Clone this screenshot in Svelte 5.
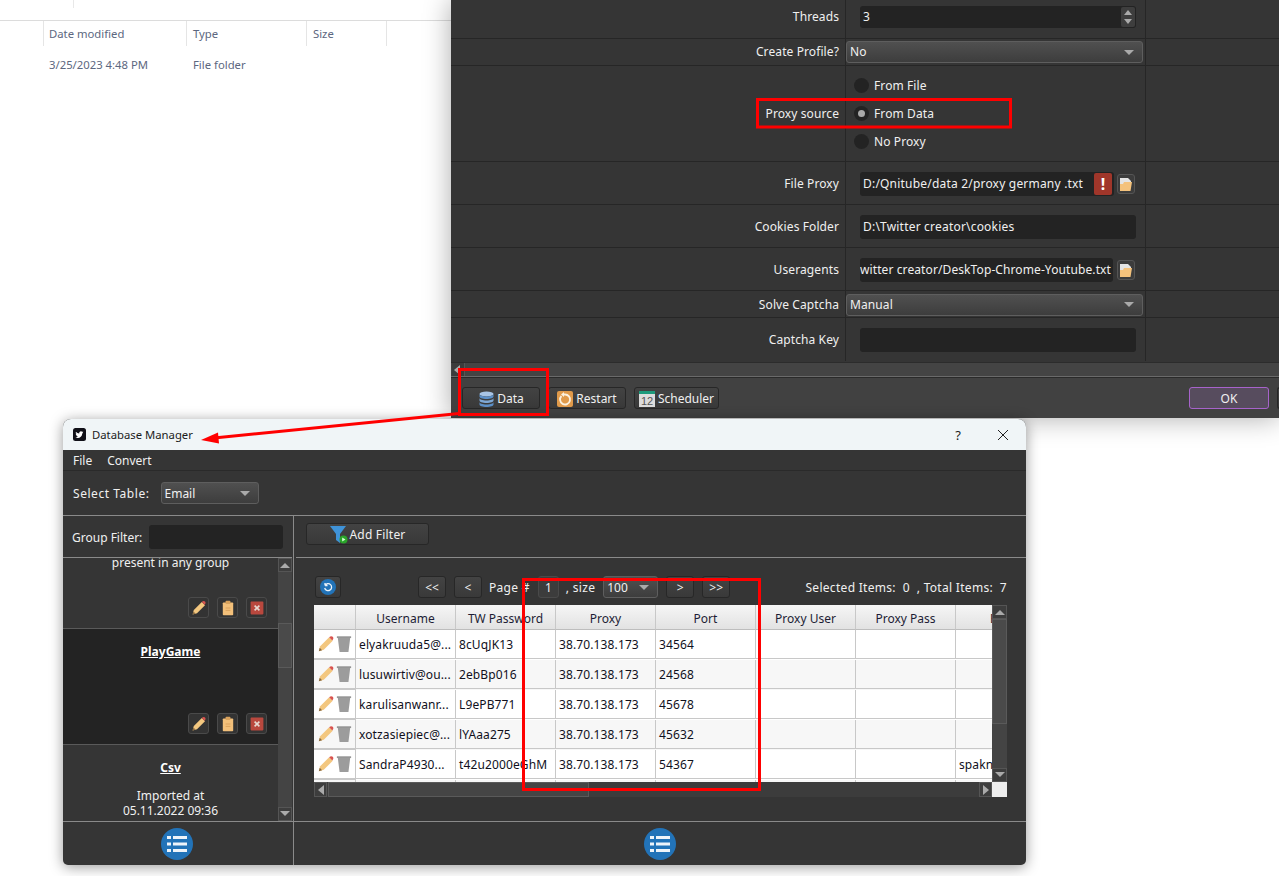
<script>
  const rows = [
    ['elyakruuda5@...', '8cUqJK13', '38.70.138.173', '34564', '', '', ''],
    ['lusuwirtiv@ou...', '2ebBp016', '38.70.138.173', '24568', '', '', ''],
    ['karulisanwanr...', 'L9ePB771', '38.70.138.173', '45678', '', '', ''],
    ['xotzasiepiec@...', 'lYAaa275', '38.70.138.173', '45632', '', '', ''],
    ['SandraP4930...', 't42u2000eGhM', '38.70.138.173', '54367', '', '', 'spaknmrz'],
    ['', '', '', '', '', '', '']
  ];
  const heads = ['', 'Username', 'TW Password', 'Proxy', 'Port', 'Proxy User', 'Proxy Pass', 'Email'];
</script>

<svg class="defs" aria-hidden="true">
  <symbol id="pencil" viewBox="0 0 20 20">
    <path d="M2 18l1.5-5.5L13.5 2.5l4 4L7.500 16.500z" fill="#f3c77f"/>
    <path d="M13.500 2.500c1.500-1.500 3-1.500 4-.5s1 2.500-.5 4z" fill="#d9534f"/>
    <path d="M2 18l1-3.700 2.700 2.700z" fill="#8a6a40"/>
  </symbol>
  <symbol id="clip" viewBox="0 0 20 20">
    <rect x="3.500" y="3" width="13" height="16" rx="1" fill="#f3c07a"/>
    <rect x="7" y="1" width="6" height="4" rx="1" fill="#d9a25c"/>
    <path d="M7 10h6M7 13h6" stroke="#d49a55" stroke-width="1"/>
  </symbol>
  <symbol id="xbox" viewBox="0 0 20 20">
    <rect x="2" y="2" width="16" height="16" rx="1" fill="#b9483e"/>
    <path d="M7 7l6 6M13 7l-6 6" stroke="#e8d8d0" stroke-width="2"/>
  </symbol>
  <symbol id="trash" viewBox="0 0 18 20">
    <path d="M1 1.500h16v1.500H1z" fill="#777"/>
    <path d="M2 3h14l-2 16H4z" fill="#9c9c9c"/>
  </symbol>
  <symbol id="folder" viewBox="0 0 14 16">
    <path d="M1 2h8l3 3v3H1z" fill="#e4e4e4"/>
    <path d="M1 8h3l1-2h8l-1.500 9H1z" fill="#f4c27c"/>
  </symbol>
  <symbol id="listc" viewBox="0 0 32 32">
    <circle cx="16" cy="16" r="16" fill="#2273b8"/>
    <path d="M6 8h4v3H6zM12 8h14v3H12zM6 14.500h4v3H6zM12 14.500h14v3H12zM6 21h4v3H6zM12 21h14v3H12z" fill="#eef4fa"/>
  </symbol>
</svg>

<div class="desk">
  <section class="explorer">
    <div class="tick"></div>
    <div class="ex-head">
      <span class="c1">Date modified</span><span class="c2">Type</span><span class="c3">Size</span>
    </div>
    <div class="ex-row">
      <span class="c1">3/25/2023 4:48 PM</span><span class="c2">File folder</span>
    </div>
  </section>

  <section class="settings">
    <div class="form">
      <div class="row h38">
        <label for="t">Threads</label>
        <div class="fld">
          <div class="input spin" id="t"><span>3</span>
            <div class="arrows"><svg width="12" height="18" viewBox="0 0 12 18"><path d="M2 7l4-5 4 5z" fill="#aaa"/><path d="M2 11l4 5 4-5z" fill="#aaa"/></svg></div>
          </div>
        </div>
        <div></div>
      </div>
      <div class="row h27">
        <span class="lab">Create Profile?</span>
        <div class="fld"><div class="combo wide"><span>No</span><i class="tri"></i></div></div>
        <div></div>
      </div>
      <div class="row h96">
        <span class="lab">Proxy source</span>
        <div class="radios">
          <div class="radio"><i></i>From File</div>
          <div class="radio on"><i></i>From Data</div>
          <div class="radio"><i></i>No Proxy</div>
        </div>
        <div></div>
      </div>
      <div class="row h43 nudge">
        <span class="lab">File Proxy</span>
        <div class="fld line">
          <div class="input grow"><span>D:/Qnitube/data 2/proxy germany .txt</span></div>
          <div class="warn">!</div>
          <div class="tool"><svg width="14" height="16"><use href="#folder"/></svg></div>
        </div>
        <div></div>
      </div>
      <div class="row h43 nudge">
        <span class="lab">Cookies Folder</span>
        <div class="fld"><div class="input"><span>D:\Twitter creator\cookies</span></div></div>
        <div></div>
      </div>
      <div class="row h43 nudge">
        <span class="lab">Useragents</span>
        <div class="fld line">
          <div class="input grow ua"><span>witter creator/DeskTop-Chrome-Youtube.txt</span></div>
          <div class="tool"><svg width="14" height="16"><use href="#folder"/></svg></div>
        </div>
        <div></div>
      </div>
      <div class="row h27 nudge">
        <span class="lab">Solve Captcha</span>
        <div class="fld"><div class="combo wide"><span>Manual</span><i class="tri"></i></div></div>
        <div></div>
      </div>
      <div class="row h43 last">
        <span class="lab">Captcha Key</span>
        <div class="fld"><div class="input"></div></div>
        <div></div>
      </div>
    </div>
    <div class="hbar"><div class="hleft"><svg width="6" height="10"><path d="M6 0L0 5l6 5z" fill="#aaa"/></svg></div></div>
    <div class="actions">
      <button class="btn data">
        <svg width="17" height="16" viewBox="0 0 17 16"><ellipse cx="8.500" cy="3" rx="7" ry="2.500" fill="#a8c4e4"/><path d="M1.500 3v2.500c0 1.400 3 2.500 7 2.500s7-1.100 7-2.500V3c0 1.400-3 2.500-7 2.500S1.500 4.400 1.500 3z" fill="#5c8fc7"/><path d="M1.500 7v2.500c0 1.400 3 2.500 7 2.500s7-1.100 7-2.500V7c0 1.400-3 2.500-7 2.500S1.500 8.400 1.500 7z" fill="#7ea8d6"/><path d="M1.500 11v2.500c0 1.400 3 2.500 7 2.500s7-1.100 7-2.500V11c0 1.400-3 2.500-7 2.500S1.500 12.400 1.500 11z" fill="#5c8fc7"/></svg>
        Data</button>
      <button class="btn restart">
        <svg width="16" height="16" viewBox="0 0 16 16"><rect width="16" height="16" rx="2" fill="#e09a4a"/><path d="M4.500 5a5 5 0 1 0 3.500-1.500H6" fill="none" stroke="#fbf1df" stroke-width="1.800"/><path d="M7 1L4 3.500 7 6z" fill="#fbf1df"/></svg>
        Restart</button>
      <button class="btn sched">
        <svg width="16" height="16" viewBox="0 0 16 16"><rect width="16" height="16" fill="#dcdcdc"/><rect width="16" height="3" fill="#1d9a7c"/><text x="8" y="14" text-anchor="middle" font-size="11" fill="#555" font-family="Liberation Sans">12</text></svg>
        Scheduler</button>
      <div class="spacer"></div>
      <button class="btn ok">OK</button>
      <button class="btn cancel"></button>
    </div>
  </section>

  <section class="db">
    <header class="title">
      <svg class="tw" width="13" height="13" viewBox="0 0 13 13"><rect width="13" height="13" rx="2.500" fill="#101018"/><path d="M10.500 4c-.3.2-.7.300-1 .3.400-.2.600-.5.800-.9-.3.200-.7.300-1.100.4a1.800 1.800 0 0 0-3 1.600C5 5.300 3.800 4.700 3 3.700c-.5.800-.2 1.800.5 2.300-.3 0-.5-.1-.8-.2 0 .8.600 1.500 1.400 1.700-.2.100-.5.100-.8 0 .2.700.9 1.200 1.700 1.200-.8.600-1.700.8-2.600.7 2.800 1.700 6.600.3 6.900-3.800.4-.3.700-.6.700-1.300z" fill="#fff"/></svg>
      <span class="ttext">Database Manager</span>
      <span class="q">?</span>
      <svg class="close" width="12" height="12" viewBox="0 0 12 12"><path d="M1 1l10 10M11 1L1 11" stroke="#222" stroke-width="1"/></svg>
    </header>
    <nav class="menu"><span>File</span><span>Convert</span></nav>
    <div class="sel">
      <span class="seltxt">Select Table:</span>
      <div class="combo email"><span>Email</span><i class="tri"></i></div>
    </div>
    <div class="body">
      <aside class="left">
        <div class="gf">
          <span>Group Filter:</span><div class="input gi"></div>
        </div>
        <div class="listwrap">
          <div class="list">
            <article class="item a">
              <p>present in any group</p>
              <div class="ops">
                <div class="tool sq"><svg width="16" height="16"><use href="#pencil"/></svg></div>
                <div class="tool sq"><svg width="16" height="16"><use href="#clip"/></svg></div>
                <div class="tool sq"><svg width="16" height="16"><use href="#xbox"/></svg></div>
              </div>
            </article>
            <article class="item b">
              <h4>PlayGame</h4>
              <div class="ops">
                <div class="tool sq"><svg width="16" height="16"><use href="#pencil"/></svg></div>
                <div class="tool sq"><svg width="16" height="16"><use href="#clip"/></svg></div>
                <div class="tool sq"><svg width="16" height="16"><use href="#xbox"/></svg></div>
              </div>
            </article>
            <article class="item c">
              <h4>Csv</h4>
              <p>Imported at<br/>05.11.2022 09:36</p>
            </article>
          </div>
          <div class="vbar">
            <div class="sb"><svg width="10" height="6"><path d="M0 6l5-5 5 5z" fill="#aaa"/></svg></div>
            <div class="track t1"><div class="thumb"></div></div>
            <div class="sb"><svg width="10" height="6"><path d="M0 0l5 5 5-5z" fill="#aaa"/></svg></div>
          </div>
        </div>
        <footer class="foot"><svg width="32" height="32"><use href="#listc"/></svg></footer>
      </aside>
      <main class="right">
        <div class="fbar">
          <button class="btn add">
            <svg width="20" height="20" viewBox="0 0 20 20"><path d="M1 1h16l-6 8v9l-4-3V9z" fill="#3f93d8"/><circle cx="14.500" cy="14.500" r="4" fill="#2aa52a"/><path d="M13.200 12.500l3.300 2-3.300 2z" fill="#d8ffd8"/></svg>
            Add Filter</button>
        </div>
        <div class="content">
          <div class="pager">
            <button class="btn ref"><svg width="16" height="16" viewBox="0 0 16 16"><circle cx="8" cy="8" r="8" fill="#2273b8"/><path d="M5 6.500a3.500 3.500 0 1 1-.3 2.500M5 6.500V4M5 6.500h2.500" fill="none" stroke="#eef4fa" stroke-width="1.300"/></svg></button>
            <button class="btn pg first">&lt;&lt;</button>
            <button class="btn pg">&lt;</button>
            <span class="ptxt">Page #</span>
            <div class="num">1</div>
            <span class="ptxt sz">, size</span>
            <div class="combo psize"><span>100</span><i class="tri"></i></div>
            <button class="btn pg">&gt;</button>
            <button class="btn pg">&gt;&gt;</button>
            <span class="stats">Selected Items:&nbsp; 0 &nbsp;, Total Items:&nbsp; 7</span>
          </div>
          <div class="grid">
            <div class="vp">
              <div class="thead">
                {#each heads as h}<div class="th">{h}</div>{/each}
              </div>
              {#each rows as r, i}
                <div class="tr" class:alt={i % 2 === 1}>
                  <div class="td ic">
                    <svg width="18" height="18"><use href="#pencil"/></svg>
                    <svg width="16" height="18"><use href="#trash"/></svg>
                  </div>
                  {#each r as c}<div class="td">{c}</div>{/each}
                  <div class="td"></div>
                </div>
              {/each}
            </div>
            <div class="vbar tv">
              <div class="sb"><svg width="10" height="6"><path d="M0 6l5-5 5 5z" fill="#aaa"/></svg></div>
              <div class="track t2"><div class="thumb"></div></div>
              <div class="sb"><svg width="10" height="6"><path d="M0 0l5 5 5-5z" fill="#aaa"/></svg></div>
            </div>
            <div class="hs">
              <div class="sb s2"><svg width="6" height="10"><path d="M6 0L0 5l6 5z" fill="#aaa"/></svg></div>
              <div class="hthumb"></div>
              <div class="spacer"></div>
              <div class="sb s2"><svg width="6" height="10"><path d="M0 0l6 5-6 5z" fill="#aaa"/></svg></div>
            </div>
            <div class="corner"></div>
          </div>
        </div>
        <footer class="foot"><svg width="32" height="32"><use href="#listc"/></svg></footer>
      </main>
    </div>
  </section>

  <svg class="marks" width="1279" height="876" viewBox="0 0 1279 876" aria-hidden="true">
    <g fill="none" stroke="#f00" stroke-width="3">
      <rect x="757.500" y="99.500" width="253" height="27.500"/>
      <rect x="459.500" y="369.500" width="88" height="45"/>
      <rect x="523.500" y="579.500" width="236" height="210"/>
      <path d="M459 413.500L214 438"/>
    </g>
    <path d="M201 440L218 432.500l1 11z" fill="#f00"/>
  </svg>
</div>

<style>
  :global(body) { margin: 0; background: #fff; }
  .defs { position: absolute; width: 0; height: 0; }
  .desk {
    position: relative; width: 1279px; height: 876px; overflow: hidden; background: #fff;
    font: 12px/16px "Noto Sans", "Open Sans", sans-serif; color: #f0f0f0;
  }
  .marks { position: absolute; inset: 0; pointer-events: none; }

  .explorer { position: absolute; left: 0; top: 0; width: 451px; height: 100px; color: #5c6780; font-size: 11.3px; }
  .tick { position: absolute; left: 73px; top: 0; width: 1px; height: 8px; background: #e8e8e8; }
  .ex-head { display: flex; margin-top: 20px; height: 26px; border-top: 1px solid #dcdcdc; align-items: flex-start; padding-left: 43px; }
  .ex-head span { height: 25px; line-height: 25px; border-left: 1px solid #e5e5e5; padding-left: 5px; box-sizing: border-box; }
  .ex-head .c2, .ex-head .c3 { padding-left: 6px; }
  .ex-row { display: flex; padding-left: 43px; margin-top: 10px; }
  .ex-row span { padding-left: 6px; box-sizing: border-box; }
  .ex-row .c2 { padding-left: 7px; }
  .c1 { width: 143px; }
  .c2 { width: 120px; }
  .ex-head .c3 { width: 81px; border-right: 1px solid #e5e5e5; }

  .settings {
    position: absolute; left: 451px; top: 0; width: 828px; height: 418px; background: #353535;
    box-shadow: 0 0 26px rgba(0,0,0,.33); display: flex; flex-direction: column;
  }
  .row { display: grid; grid-template-columns: 394px 301px 1fr; border-bottom: 1px solid #262626; box-sizing: border-box; align-items: center; letter-spacing: .1px; }
  .row > .radios, .row > .fld { height: 100%; border-left: 1px solid #262626; border-right: 1px solid #262626; box-sizing: border-box; }
  .h38 { height: 39px; } .h27 { height: 27px; } .h96 { height: 96px; } .h43 { height: 43px; }
  .h38 > label { padding-bottom: 4px; box-sizing: border-box; }
  .h38 > .fld { padding-bottom: 5px; }
  .nudge > .lab { padding-top: 2px; }
  .nudge > .fld { padding-top: 1px; }
  .last { border-bottom: 0; }
  label, .lab { text-align: right; padding-right: 6px; }
  .fld { display: flex; align-items: center; padding-left: 14px; padding-right: 9px; }
  .fld .combo.wide { margin-left: -14px; width: 297px; flex: none; }
  .fld.line { gap: 4px; padding-right: 10px; }
  .input {
    background: #232323; border-radius: 3px; height: 24px; flex: 1; min-width: 0; display: flex; align-items: center;
    padding-left: 3px; box-sizing: border-box; position: relative; overflow: hidden; white-space: nowrap; letter-spacing: .2px;
  }
  .ua { padding-left: 0; letter-spacing: .1px; }
  .spin { padding-right: 16px; height: 22px; }
  .arrows { position: absolute; right: 1px; top: 1px; bottom: 1px; width: 14px; background: #3e3e3e; display: flex; align-items: center; justify-content: center; border-radius: 2px; }
  .combo {
    background: linear-gradient(#505050, #3d3d3d); border: 1px solid #5e5e5e; border-radius: 3px; height: 22px;
    display: flex; align-items: center; justify-content: space-between; padding: 0 8px 0 3px; box-sizing: border-box;
  }
  .tri { width: 0; height: 0; border: 5px solid transparent; border-top: 5px solid #aaa; border-bottom: 0; }
  .radios { display: flex; flex-direction: column; justify-content: center; gap: 12px; padding-left: 8px; }
  .radio { display: flex; align-items: center; height: 16px; gap: 5px; }
  .radio i { width: 15px; height: 15px; border-radius: 50%; background: #232323; display: block; position: relative; }
  .on i::after { content: ""; position: absolute; left: 4px; top: 4px; width: 7px; height: 7px; background: #aaa; border-radius: 50%; }
  .warn {
    width: 18px; height: 22px; background: #a0362a; color: #fff; font-weight: 700; font-size: 16px;
    text-align: center; line-height: 22px; border-radius: 2px; margin-left: -24px; margin-right: 1px; z-index: 1;
  }
  .tool {
    width: 18px; height: 20px; background: #3c3c3c; border: 1px solid #555; border-radius: 3px; box-sizing: border-box;
    display: flex; align-items: center; justify-content: center; flex: none;
  }
  .tool.sq { width: 21px; height: 21px; border-color: #4a4a4a; background: #333; }
  .hbar { height: 15px; margin-top: 1px; background: #444; border-bottom: 1px solid #6a6a6a; border-top: 1px solid #2c2c2c; box-sizing: border-box; }
  .hleft { width: 13px; height: 100%; margin-left: 1px; display: flex; align-items: center; padding-left: 2px; background: #3c3c3c; border-right: 1px solid #555; box-sizing: border-box; }
  .actions { flex: 1; display: flex; align-items: center; gap: 8px; padding-left: 11px; background: #414141; border-top: 1px solid #2a2a2a; }
  .spacer { flex: 1; }
  .btn {
    font: inherit; color: #f0f0f0; height: 22px; background: linear-gradient(#434343, #393939); border: 1px solid #272727;
    border-radius: 3px; display: flex; align-items: center; justify-content: center; gap: 3px; padding: 0; box-sizing: border-box;
  }
  .actions .btn, .add, .pg { padding-top: 2px; }
  .data { width: 78px; gap: 2px; }
  .restart { width: 78px; }
  .sched { width: 85px; }
  .ok { width: 80px; background: #574c5e; border-color: #a763cb; }
  .cancel { width: 10px; margin-right: -8px; border-right: 0; }

  .db {
    position: absolute; left: 63px; top: 419px; width: 963px; height: 446px; background: #353535;
    border-radius: 8px 8px 5px 5px; overflow: hidden; box-shadow: 0 2px 14px rgba(0,0,0,.4); display: flex; flex-direction: column;
  }
  .title { height: 31px; flex: none; background: #f0f5f7; color: #1b1b1b; display: flex; align-items: center; padding-left: 10px; font-size: 11.3px; }
  .ttext { margin-left: 6px; }
  .q { margin-left: auto; font-size: 13px; margin-right: 36px; }
  .close { margin-right: 17px; }
  .menu { height: 20px; flex: none; display: flex; gap: 15px; padding-left: 10px; align-items: center; border-bottom: 1px solid #2a2a2a; }
  .menu span, .seltxt, .gf span, .ptxt, .stats, .db .combo span { padding-top: 2px; }
  .sel { height: 44px; flex: none; display: flex; align-items: center; gap: 11px; padding-left: 10px; border-bottom: 1px solid #8a8a8a; }
  .seltxt { letter-spacing: .55px; }
  .email { width: 98px; }
  .body { flex: 1; display: flex; min-height: 0; }
  .left { width: 231px; flex: none; border-right: 1px solid #8a8a8a; box-sizing: border-box; display: flex; flex-direction: column; }
  .gf { height: 41px; flex: none; display: flex; align-items: center; gap: 7px; padding-left: 9px; margin-right: 1px; border-bottom: 1px solid #8a8a8a; padding-right: 9px; }
  .gi { flex: 1; }
  .listwrap { height: 263px; flex: none; display: flex; padding-right: 1px; overflow: hidden; }
  .list { flex: 1; min-width: 0; text-align: center; }
  .item { box-sizing: border-box; position: relative; border-bottom: 1px solid #5a5a5a; display: flow-root; }
  .item p { margin: 0; }
  .item h4 { margin: 0; font-size: 12px; font-weight: 700; text-decoration: underline; color: #fff; }
  .ops { position: absolute; right: 11px; bottom: 10px; display: flex; gap: 8px; }
  .a { height: 71px; }
  .a p { margin-top: -3px; }
  .b { height: 116px; background: #232323; padding-top: 15px; }
  .c { height: 80px; padding-top: 15px; border: 0; }
  .c p { margin-top: 12px; line-height: 15px; }
  .vbar { width: 14px; flex: none; display: flex; flex-direction: column; background: #444; }
  .sb { height: 14px; flex: none; background: #3d3d3d; border: 1px solid #555; box-sizing: border-box; display: flex; align-items: center; justify-content: center; }
  .track { flex: 1; position: relative; }
  .thumb { position: absolute; left: 0; right: 0; border: 1px solid #5a5a5a; background: #4a4a4a; box-sizing: border-box; }
  .t1 .thumb { top: 51px; height: 45px; }
  .t2 .thumb { top: 0; height: 105px; }
  .foot { flex: 1; display: flex; align-items: center; justify-content: center; border-top: 1px solid #8a8a8a; }
  .left .foot { padding-right: 2px; }
  .right { flex: 1; min-width: 0; display: flex; flex-direction: column; }
  .fbar { height: 34px; padding-top: 7px; flex: none; display: flex; align-items: flex-start; padding-left: 10px; margin-left: 2px; border-bottom: 1px solid #8a8a8a; }
  .add { width: 123px; gap: 0; letter-spacing: .2px; }
  .content { height: 263px; flex: none; padding-left: 20px; display: flow-root; }
  .pager { display: flex; align-items: center; height: 22px; margin-top: 18px; padding-left: 1px; gap: 8px; }
  .ref { width: 26px; margin-right: 69px; }
  .pg { width: 28px; }
  .ptxt { margin-left: -1px; letter-spacing: .3px; }
  .num { width: 21px; height: 22px; background: #3c3c3c; border: 1px solid #4a4a4a; border-radius: 3px; text-align: center; line-height: 21px; box-sizing: border-box; }
  .psize { width: 55px; }
  .stats { margin-left: auto; margin-right: 19px; letter-spacing: .3px; }
  .grid { margin-top: 7px; display: grid; grid-template-columns: 678px 15px; grid-template-rows: 177px 15px; width: 693px; }
  .vp { overflow: hidden; background: #fff; color: #10101c; }
  .thead, .tr { display: grid; grid-template-columns: 42px repeat(7, 100px); width: 742px; }
  .thead { height: 25px; }
  .th { background: linear-gradient(#f6f6f6, #e2e2e2); border-right: 1px solid #c8c8c8; border-bottom: 1px solid #bdbdbd; text-align: center; line-height: 27px; color: #1d1d35; box-sizing: border-box; overflow: hidden; }
  .tr { height: 30px; background: #fff; }
  .alt { background: #f7f7f7; }
  .td { border-right: 1px solid #c8c8c8; border-bottom: 1px solid #c8c8c8; box-sizing: border-box; padding-left: 3px; line-height: 29px; white-space: nowrap; overflow: hidden; letter-spacing: .12px; }
  .ic { padding-left: 3px; display: flex; align-items: center; gap: 1px; }
  .tv { width: 15px; }
  .hs { display: flex; background: #3c3c3c; height: 15px; }
  .s2 { width: 13px; height: 15px; }
  .hthumb { width: 261px; background: #454545; border: 1px solid #5a5a5a; box-sizing: border-box; margin-left: 1px; }
  .corner { background: #eeeeee; }
</style>
